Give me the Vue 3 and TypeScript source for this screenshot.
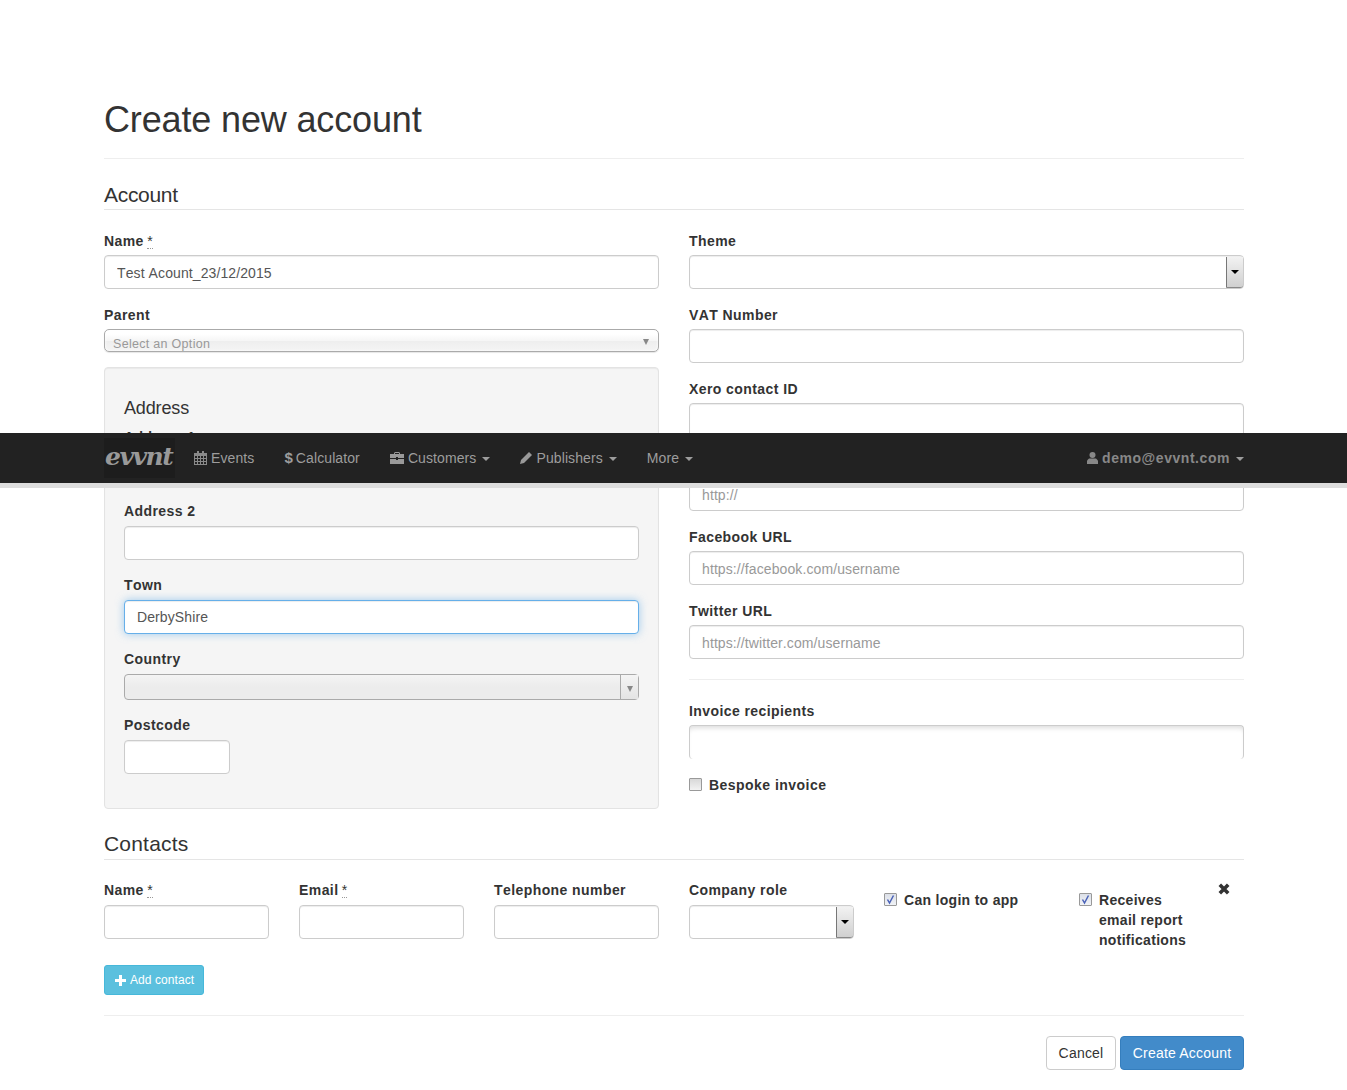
<script setup lang="ts">
interface Field { label: string; placeholder?: string; required?: boolean }
const socialFields: Field[] = [
  { label: 'VAT Number' },
  { label: 'Xero contact ID' },
  { label: 'Website URL', placeholder: 'http://' },
  { label: 'Facebook URL', placeholder: 'https://facebook.com/username' },
  { label: 'Twitter URL', placeholder: 'https://twitter.com/username' }
]
const contactFields: Field[] = [
  { label: 'Name', required: true },
  { label: 'Email', required: true },
  { label: 'Telephone number' }
]
</script>

<template>
  <div class="page">
    <div class="container">
      <div class="page-header"><h1>Create new account</h1></div>
      <form @submit.prevent>
        <div class="legend account">Account</div>
        <div class="two-cols">
          <div class="col">
            <div class="group">
              <label>Name <abbr>*</abbr></label>
              <input class="control" value="Test Acount_23/12/2015" />
            </div>
            <div class="group">
              <label>Parent</label>
              <div class="chosen">
                <span>Select an Option</span>
                <i class="tri"></i>
              </div>
            </div>
            <div class="well">
              <div class="sub-legend">Address</div>
              <div class="group"><label>Address 1</label><input class="control" /></div>
              <div class="group"><label>Address 2</label><input class="control" /></div>
              <div class="group"><label>Town</label><input class="control focus" value="DerbyShire" /></div>
              <div class="group">
                <label>Country</label>
                <div class="disabled-select"><span class="disabled-btn"><i class="tri"></i></span></div>
              </div>
              <div class="group"><label>Postcode</label><input class="control postcode" /></div>
            </div>
          </div>
          <div class="col">
            <div class="group">
              <label>Theme</label>
              <div class="control native-select"><span class="spin"><i class="tri dark"></i></span></div>
            </div>
            <div v-for="f in socialFields" :key="f.label" class="group">
              <label>{{ f.label }}</label>
              <input class="control" :placeholder="f.placeholder" />
            </div>
            <hr class="rule" />
            <div class="group">
              <label>Invoice recipients</label>
              <div class="textarea"></div>
            </div>
            <div class="check-line">
              <span class="check"></span>
              <span class="check-text">Bespoke invoice</span>
            </div>
          </div>
        </div>

        <div class="legend contacts">Contacts</div>
        <div class="contact-row">
          <div v-for="f in contactFields" :key="f.label" class="group">
            <label>{{ f.label }} <abbr v-if="f.required">*</abbr></label>
            <input class="control" />
          </div>
          <div class="group">
            <label>Company role</label>
            <div class="control native-select"><span class="spin"><i class="tri dark"></i></span></div>
          </div>
          <div class="check-line top">
            <span class="check on">
              <svg viewBox="0 0 11 11" width="11" height="11"><path d="M2.5 5.5l2 3.5 4-7.5" fill="none" stroke="#4a62b8" stroke-width="1.5" /></svg>
            </span>
            <span class="check-text">Can login to app</span>
          </div>
          <div class="check-line top last">
            <span class="check on">
              <svg viewBox="0 0 11 11" width="11" height="11"><path d="M2.5 5.5l2 3.5 4-7.5" fill="none" stroke="#4a62b8" stroke-width="1.5" /></svg>
            </span>
            <span class="check-text narrow">Receives email report notifications</span>
            <svg class="remove" viewBox="0 0 12 12" width="12" height="12"><path d="M1.8 1.8l8.4 8.4M10.2 1.8l-8.4 8.4" stroke="#333" stroke-width="3.6" /></svg>
          </div>
        </div>
        <button type="button" class="btn info">
          <svg viewBox="0 0 11 11" width="11" height="11"><path d="M4 0h3v4h4v3H7v4H4V7H0V4h4z" fill="#fff" /></svg>
          <span>Add contact</span>
        </button>
        <hr class="rule actions-rule" />
        <div class="actions">
          <button type="button" class="btn cancel">Cancel</button>
          <button type="submit" class="btn primary">Create Account</button>
        </div>
      </form>
    </div>

    <nav class="navbar">
      <div class="nav-inner">
        <a class="brand">evvnt</a>
        <a class="nav-link">
          <svg viewBox="0 0 13 14" width="13" height="14"><path fill="#8a8a8a" d="M3 0h2v2h3V0h2v2h3v12H0V2h3zM1 5v2h2V5zm3 0v2h2V5zm3 0v2h2V5zm3 0v2h2V5zM1 8v2h2V8zm3 0v2h2V8zm3 0v2h2V8zm3 0v2h2V8zM1 11v2h2v-2zm3 0v2h2v-2zm3 0v2h2v-2zm3 0v2h2v-2z" /></svg>
          <span>Events</span>
        </a>
        <a class="nav-link"><span class="dollar">$</span><span>Calculator</span></a>
        <a class="nav-link">
          <svg viewBox="0 0 14 12" width="14" height="12"><path fill="#999" d="M4 2V1l1-1h4l1 1v1h4v4H8V5H6v1H0V2zm1 0h4V1H5zM0 7h6v1h2V7h6v5H0z" /></svg>
          <span>Customers</span><i class="caret"></i>
        </a>
        <a class="nav-link">
          <svg viewBox="0 0 12 12" width="12" height="12"><path fill="#999" d="M0 12l1-4 7-7 1-1 3 3-1 1-7 7z" /></svg>
          <span>Publishers</span><i class="caret"></i>
        </a>
        <a class="nav-link"><span>More</span><i class="caret"></i></a>
        <a class="nav-link user">
          <svg viewBox="0 0 11 12" width="11" height="12"><circle cx="5.5" cy="3" r="3" fill="#888" /><path fill="#888" d="M0 12V8.500L2 6.500h7l2 2V12z" /></svg>
          <span>demo@evvnt.com</span><i class="caret"></i>
        </a>
      </div>
    </nav>
  </div>
</template>

<style>
html, body { margin: 0; background: #fff; }
</style>

<style scoped>
.page {
  position: relative;
  min-height: 1090px;
  font-family: "Liberation Sans", Arial, sans-serif;
  font-size: 14px;
  line-height: 20px;
  color: #333;
  overflow: hidden;
  font-kerning: none;
}
.container { width: 1140px; margin-left: 104px; padding-top: 99px; }
.page-header { border-bottom: 1px solid #eee; padding: 1px 0 18px; margin-bottom: 20px; }
h1 { margin: 0; font-size: 36px; font-weight: 400; line-height: 40px; letter-spacing: -.15px; }
.legend {
  font-size: 21px; line-height: 30px; height: 30px; color: #333;
  border-bottom: 1px solid #e5e5e5; margin-bottom: 20px;
}
.account { line-height: 32px; letter-spacing: -.3px; }
.contacts { letter-spacing: .2px; }
.two-cols { display: grid; grid-template-columns: 555px 555px; column-gap: 30px; }
.group { margin-bottom: 15px; }
label {
  display: block; font-weight: 700; letter-spacing: .42px; margin-bottom: 5px; line-height: 20px;
}
.two-cols label { padding-top: 1px; margin-bottom: 4px; }
.two-cols .well label { padding-top: 0; margin-bottom: 5px; }
abbr { font-weight: 400; border-bottom: 1px dotted #999; line-height: 10px; display: inline-block; height: 12px; letter-spacing: 0; margin-left: -1px; }
.control {
  display: block; box-sizing: border-box; width: 100%; height: 34px; padding: 6px 12px;
  background: #fff; border: 1px solid #ccc; border-radius: 4px;
  box-shadow: inset 0 1px 1px rgba(0,0,0,.075);
  font: 14px/20px "Liberation Sans", Arial, sans-serif; color: #555; letter-spacing: .1px; outline: none;
  font-kerning: none;
}
.two-cols .control { padding-top: 7px; padding-bottom: 5px; }
.two-cols .well .control { padding: 6px 12px; }
.control::placeholder { color: #999; opacity: 1; }
.focus { border-color: #66afe9; box-shadow: inset 0 1px 1px rgba(0,0,0,.075), 0 0 8px rgba(102,175,233,.6); }
.two-cols .well .postcode { width: 106px; }
.chosen {
  position: relative; box-sizing: border-box; height: 23px; padding-left: 8px;
  border: 1px solid #aaa; border-radius: 5px; background: linear-gradient(#fff 20%, #f6f6f6 50%, #eee 52%, #f4f4f4);
  box-shadow: 0 0 3px #fff inset, 0 1px 1px rgba(0,0,0,.1);
  font-size: 12.500px; line-height: 28px; color: #999; letter-spacing: .3px; overflow: hidden;
}
.tri { display: block; width: 0; height: 0; border-left: 3.500px solid transparent; border-right: 3.500px solid transparent; border-top: 6px solid #888; }
.chosen .tri { position: absolute; right: 9px; top: 9px; }
.well {
  box-sizing: border-box; height: 442px; margin-bottom: 20px; padding: 19px;
  background: #f5f5f5; border: 1px solid #e3e3e3; border-radius: 4px;
  box-shadow: inset 0 1px 1px rgba(0,0,0,.05);
}
.sub-legend { font-size: 18px; line-height: 42px; height: 40px; color: #333; letter-spacing: -.15px; }
.disabled-select {
  display: flex; justify-content: flex-end; box-sizing: border-box; height: 26px;
  border: 1px solid #aaa; border-radius: 4px; background: linear-gradient(#f4f4f4, #ececec 50%);
}
.disabled-btn {
  display: flex; align-items: center; justify-content: center; width: 17px; border-left: 1px solid #aaa;
  background: linear-gradient(#f4f4f4, #e4e4e4);
}
.disabled-btn .tri { border-top-color: #888; margin-top: 4px; }
.native-select { position: relative; padding: 0; }
.spin {
  position: absolute; right: 0; top: 1px; bottom: 0; width: 16px;
  display: flex; align-items: center; justify-content: center;
  border-left: 1px solid #777; border-bottom: 1px solid #888; border-radius: 0 0 3px 0;
  background: linear-gradient(#f2f2f2, #d0d0d0);
}
.tri.dark { border-top-color: #000; border-left-width: 4px; border-right-width: 4px; border-top-width: 4px; }
.rule { border: 0; border-top: 1px solid #eee; margin: 20px 0; }
.textarea {
  box-sizing: border-box; height: 34px; border: 1px solid #ccc; border-bottom: 0; border-radius: 4px;
  box-shadow: inset 0 5px 5px -3px rgba(0,0,0,.14);
}
.check-line { display: flex; align-items: flex-start; padding-top: 1px; font-weight: 700; letter-spacing: .46px; }
.check {
  box-sizing: border-box; flex: none; width: 13px; height: 13px; margin: 3px 7px 0 0; border: 1px solid #999;
  background: linear-gradient(#d8d8d8, #f2f2f2); display: block; border-radius: 1px;
}
.check svg { display: block; margin: 0; width: 11px; height: 11px; }
.check.on { background: linear-gradient(#dce0e8, #f0f2f6); }
.check-line.top { padding-top: 10px; position: relative; letter-spacing: .3px; }
.narrow { max-width: 100px; }
.contact-row { display: grid; grid-template-columns: repeat(6, 165px); column-gap: 30px; height: 85px; }
.last .remove { position: absolute; right: 14px; top: 3px; }
.btn { font: 14px/20px "Liberation Sans", Arial, sans-serif; border-radius: 4px; border: 1px solid transparent; padding: 6px 12px; height: 34px; box-sizing: border-box; letter-spacing: .2px; }
.info {
  display: flex; align-items: center; gap: 4px; width: 100px; height: 30px; padding: 0 10px;
  background: #5bc0de; border-color: #46b8da; color: #fff; font-size: 12px; letter-spacing: .08px; border-radius: 3px; white-space: nowrap;
}
.info svg { flex: none; }
.actions-rule { margin: 20px 0; }
.actions { display: flex; justify-content: flex-end; gap: 4px; }
.cancel { background: #fff; border-color: #ccc; color: #333; width: 70px; padding: 0; }
.primary { background: #428bca; border-color: #357ebd; color: #fff; width: 124px; padding: 0; }
.navbar {
  position: absolute; left: 0; right: 0; top: 433px; height: 50px; background: #222;
  border-bottom: 5px solid #ddd; box-sizing: content-box;
}
.nav-inner { display: flex; align-items: center; width: 1140px; margin-left: 104px; height: 50px; }
.brand {
  display: block; flex: none; width: 71px; height: 40px; margin-right: 4px; background: #1d1d1d; color: #999;
  font: italic 700 25px/38px "DejaVu Serif", serif; letter-spacing: -1.5px; padding-left: 1px; box-sizing: border-box; overflow: hidden;
}
.nav-link {
  display: flex; align-items: center; gap: 4px; padding: 0 15px; height: 50px; color: #9d9d9d;
  white-space: nowrap; letter-spacing: .1px;
}
.nav-link svg { flex: none; }
.dollar { font-weight: 700; font-size: 15px; margin-right: -1px; }
.caret { display: block; width: 0; height: 0; border-left: 4.500px solid transparent; border-right: 4.500px solid transparent; border-top: 4px solid #9d9d9d; margin-left: 2px; margin-top: 1px; }
.user { margin-left: auto; padding-right: 0; font-weight: 700; color: #888; letter-spacing: .55px; }
</style>
